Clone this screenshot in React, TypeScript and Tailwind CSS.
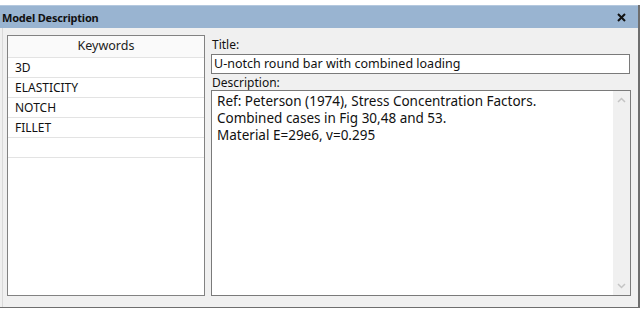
import React from "react";

const ui = { fontFamily: '"Noto Sans", "Open Sans", sans-serif' };

export default function App() {
  const rows = ["3D", "ELASTICITY", "NOTCH", "FILLET", ""];
  return (
    <div className="w-[642px] h-[310px] bg-white pt-[5px]" style={ui}>
      <div className="w-[640px] h-[303px] flex flex-col border-r-2 border-b border-[#6e6e6e]">
        <div className="h-[23px] bg-[#99b4d1] flex items-center justify-between pl-[2px] pr-[12px] border-t border-[#b4c8de]">
          <span className="text-[11px] font-bold text-[#111] leading-none tracking-[-0.2px]">Model Description</span>
          <svg width="9" height="9" viewBox="0 0 9 9">
            <path d="M1 1 L8 8 M8 1 L1 8" stroke="#111" strokeWidth="2" />
          </svg>
        </div>
        <div className="flex-1 bg-[#f0f0f0] pl-[2px]">
          <div className="h-full border-l border-[#d9d9d9] flex pl-[4px] pt-[7px] pb-[11px]">
            <div className="w-[198px] border border-[#828282] bg-white flex flex-col">
              <div className="h-[22px] bg-[#fafafa] border-b border-[#e3e3e3] flex items-center justify-center text-[12.5px] text-[#222]">
                Keywords
              </div>
              {rows.map((r, i) => (
                <div
                  key={i}
                  className="h-[20px] border-b border-[#e3e3e3] flex items-center pl-[7px] text-[12px] text-[#111]"
                >
                  {r}
                </div>
              ))}
            </div>
            <div className="w-[420px] ml-[6px] flex flex-col pt-[3px]">
              <div className="text-[12px] leading-[14px] h-[14px] text-[#111] pl-[1px]">Title:</div>
              <div className="h-[20px] mt-[2px] border border-[#7a7a7a] bg-white flex items-center pl-[2px] text-[12.5px] text-[#111] w-[419px]">
                U-notch round bar with combined loading
              </div>
              <div className="text-[12px] leading-[14px] h-[14px] mt-[2px] text-[#111] pl-[1px]">Description:</div>
              <div className="flex-1 border border-[#7a7a7a] bg-white flex">
                <div className="flex-1 pl-[5px] pt-[2px] text-[13.5px] leading-[17px] text-[#111]">
                  <div>Ref: Peterson (1974), Stress Concentration Factors.</div>
                  <div>Combined cases in Fig 30,48 and 53.</div>
                  <div>Material E=29e6, v=0.295</div>
                </div>
                <div className="w-[17px] bg-[#f0f0f0] flex flex-col justify-between items-center py-[6px]">
                  <svg width="9" height="6" viewBox="0 0 9 6">
                    <path d="M1 5 L4.5 1.5 L8 5" stroke="#c4c4c4" strokeWidth="1.5" fill="none" />
                  </svg>
                  <svg width="9" height="6" viewBox="0 0 9 6">
                    <path d="M1 1 L4.5 4.5 L8 1" stroke="#c4c4c4" strokeWidth="1.5" fill="none" />
                  </svg>
                </div>
              </div>
            </div>
          </div>
        </div>
      </div>
    </div>
  );
}
